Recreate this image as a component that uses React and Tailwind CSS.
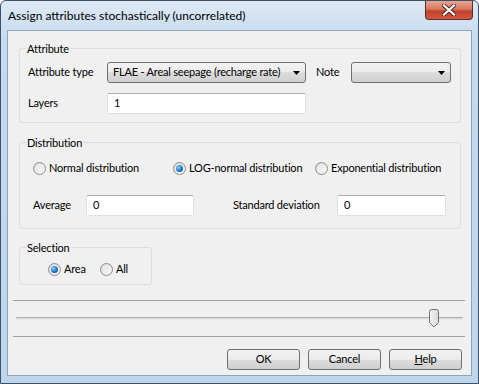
import React from 'react';

const Radio = ({ checked }) => (
  <span className="relative w-[13px] h-[13px] rounded-full border border-[#8f8f8f] bg-gradient-to-br from-[#d4d4d4] to-[#f6f6f6] flex items-center justify-center shrink-0">
    <span className="w-[9px] h-[9px] rounded-full bg-gradient-to-br from-[#e2e2e2] to-[#fafafa] flex items-center justify-center">
      {checked && (
        <span className="w-[7px] h-[7px] rounded-full bg-[radial-gradient(circle_at_35%_35%,#7fd0ff,#1a6bc4_60%,#0c3f86)]" />
      )}
    </span>
  </span>
);

const Combo = ({ width, children }) => (
  <div
    className="h-[21px] rounded-[3px] border border-[#707070] bg-[linear-gradient(to_bottom,#f3f3f3_0%,#ebebeb_50%,#dddddd_50%,#cfcfcf_100%)] flex items-center overflow-hidden shrink-0"
    style={{ width }}
  >
    <span className="flex-1 pl-[5px] whitespace-nowrap overflow-hidden">{children}</span>
    <span className="w-[17px] flex justify-center shrink-0">
      <svg width="7" height="4" viewBox="0 0 7 4">
        <path d="M0 0h7L3.5 4z" fill="#000" />
      </svg>
    </span>
  </div>
);

const Field = ({ width, value }) => (
  <div
    className="h-[21px] rounded-[2px] border border-[#dcdfe4] border-t-[#abadb3] bg-white flex items-center pl-[6px] shrink-0"
    style={{ width }}
  >
    {value}
  </div>
);

const Group = ({ title, className, inner, children }) => (
  <fieldset className={`border border-[#d5dfe5] rounded-[3px] ${className}`}>
    <legend className="ml-[6px] px-[1px] leading-[15px] text-black">{title}</legend>
    <div className={inner}>{children}</div>
  </fieldset>
);

const Button = ({ children }) => (
  <button className="w-[73px] h-[21px] rounded-[3px] border border-[#707070] bg-[linear-gradient(to_bottom,#f2f2f2_0%,#ebebeb_50%,#dddddd_50%,#cfcfcf_100%)] text-black flex items-center justify-center">
    {children}
  </button>
);

export default function App() {
  return (
    <div className="w-[479px] h-[384px] font-['Lato',_sans-serif] text-[12px] text-black bg-white">
      <div className="w-[479px] h-[384px] rounded-t-[6px] border border-[#3e5166] bg-[linear-gradient(to_bottom,#dde9f6,#c6daef_40px,#bfd5ec)] flex flex-col overflow-hidden">
        {/* Title bar */}
        <div className="h-[29px] flex items-start shrink-0">
          <span className="pl-[7px] pt-[7px] leading-[15px] text-[#000]">
            Assign attributes stochastically (uncorrelated)
          </span>
          <div className="ml-auto mr-[5px] w-[48px] h-[19px] rounded-b-[4px] border border-t-0 border-[#5a2e2a] bg-[linear-gradient(to_bottom,#e8a493_0%,#d77a62_45%,#c2412a_55%,#d0583c_100%)] flex items-center justify-center">
            <svg width="14" height="12" viewBox="0 0 14 12">
              <path
                d="M2 1.5L12 10.5M12 1.5L2 10.5"
                stroke="#4a2420"
                strokeWidth="4"
                strokeLinecap="square"
              />
              <path
                d="M2 1.5L12 10.5M12 1.5L2 10.5"
                stroke="#ffffff"
                strokeWidth="2.2"
                strokeLinecap="square"
              />
            </svg>
          </div>
        </div>

        {/* Client area */}
        <div className="mx-[6px] h-[346px] border border-[#8ea4bb] bg-[#f0f0f0] flex flex-col shrink-0 text-[11px] tracking-[-0.2px]">
          <div className="px-[11px] flex flex-col">
            <Group title="Attribute" className="mt-[10px] w-[442px]" inner="pl-[8px] pt-[6px] pb-[8px]">
              <div className="flex items-center h-[21px]">
                <span className="w-[79px]">Attribute type</span>
                <Combo width={199}>FLAE - Areal seepage (recharge rate)</Combo>
                <span className="ml-[10px] w-[35px]">Note</span>
                <Combo width={100}></Combo>
              </div>
              <div className="flex items-center h-[21px] mt-[10px]">
                <span className="w-[79px]">Layers</span>
                <Field width={199} value="1" />
              </div>
            </Group>

            <Group title="Distribution" className="mt-[12px] w-[442px]" inner="pl-[13px] pt-[12px] pb-[12px]">
              <div className="flex items-center h-[13px] whitespace-nowrap">
                <label className="w-[140px] flex items-center gap-[3px]">
                  <Radio />
                  <span>Normal distribution</span>
                </label>
                <label className="w-[142px] flex items-center gap-[3px]">
                  <Radio checked />
                  <span>LOG-normal distribution</span>
                </label>
                <label className="flex items-center gap-[3px]">
                  <Radio />
                  <span>Exponential distribution</span>
                </label>
              </div>
              <div className="flex items-center h-[21px] mt-[20px]">
                <span className="w-[53px]">Average</span>
                <Field width={108} value="0" />
                <span className="ml-[39px] w-[104px] whitespace-nowrap">Standard deviation</span>
                <Field width={109} value="0" />
              </div>
            </Group>

            <Group title="Selection" className="mt-[11px] w-[133px]" inner="pl-[28px] pt-[8px] pb-[8px]">
              <div className="flex items-center h-[13px]">
                <label className="w-[52px] flex items-center gap-[3px]">
                  <Radio checked />
                  <span>Area</span>
                </label>
                <label className="flex items-center gap-[3px]">
                  <Radio />
                  <span>All</span>
                </label>
              </div>
            </Group>
          </div>

          {/* Separator + slider */}
          <div className="mt-[15px] ml-[5px] mr-[6px] border-t border-[#a0a0a0]" />
          <div className="relative mx-[8px] h-[35px] flex items-center">
            <div className="w-full h-[3px] border-t border-[#b0b0b0] border-b border-b-[#e8e8e8] bg-[#dcdcdc] rounded-[1px]" />
            <svg
              className="absolute left-[412px] top-[8px]"
              width="12"
              height="19"
              viewBox="0 0 12 19"
            >
              <defs>
                <linearGradient id="thumb" x1="0" y1="0" x2="1" y2="0">
                  <stop offset="0" stopColor="#f4f4f4" />
                  <stop offset="1" stopColor="#d8d8d8" />
                </linearGradient>
              </defs>
              <path
                d="M1.5 2.5a2 2 0 0 1 2-2h5a2 2 0 0 1 2 2v11l-4.5 4.5l-4.5-4.5z"
                fill="url(#thumb)"
                stroke="#707070"
              />
            </svg>
          </div>
          <div className="ml-[5px] mr-[6px] border-t border-[#a0a0a0]" />

          {/* Buttons */}
          <div className="flex justify-end gap-[8px] mt-[12px] mr-[9px]">
            <Button>OK</Button>
            <Button>Cancel</Button>
            <Button>
              <span className="underline">H</span>elp
            </Button>
          </div>
        </div>
      </div>
    </div>
  );
}
